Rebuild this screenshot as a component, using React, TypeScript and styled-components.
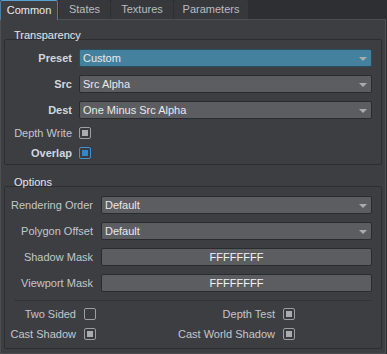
import React from 'react';
import styled, { createGlobalStyle, css } from 'styled-components';

type Option = { label: string; value: string; bold?: boolean; accent?: boolean };

const tabs = [
  { name: 'Common', width: 58 },
  { name: 'States', width: 51 },
  { name: 'Textures', width: 62 },
  { name: 'Parameters', width: 74 },
];

const blendRows: Option[] = [
  { label: 'Preset', value: 'Custom', bold: true, accent: true },
  { label: 'Src', value: 'Src Alpha', bold: true },
  { label: 'Dest', value: 'One Minus Src Alpha', bold: true },
];

const App: React.FC = () => {
  return (
    <Root>
      <GlobalStyle />
      <TabBar>
        {tabs.map((t, i) => (
          <Tab key={t.name} $width={t.width} $active={i === 0}>
            {t.name}
          </Tab>
        ))}
      </TabBar>
      <Panel>
        <GroupTitle>Transparency</GroupTitle>
        <GroupBox>
          {blendRows.map((row) => (
            <Row key={row.label} $labelWidth={67}>
              <Label $bold={row.bold}>{row.label}</Label>
              <Select $accent={row.accent}>
                <span>{row.value}</span>
                <Arrow />
              </Select>
            </Row>
          ))}
          <Row $labelWidth={67}>
            <Label>Depth Write</Label>
            <Check $state="on" />
          </Row>
          <Row $labelWidth={67}>
            <Label $bold>Overlap</Label>
            <Check $state="active" />
          </Row>
        </GroupBox>

        <GroupTitle $top={11}>Options</GroupTitle>
        <GroupBox $bottom={8}>
          <Row $labelWidth={88} $gap={8}>
            <Label>Rendering Order</Label>
            <Select>
              <span>Default</span>
              <Arrow />
            </Select>
          </Row>
          <Row $labelWidth={88} $gap={8}>
            <Label>Polygon Offset</Label>
            <Select>
              <span>Default</span>
              <Arrow />
            </Select>
          </Row>
          <Row $labelWidth={88} $gap={8}>
            <Label>Shadow Mask</Label>
            <MaskField>FFFFFFFF</MaskField>
          </Row>
          <Row $labelWidth={88} $gap={8}>
            <Label>Viewport Mask</Label>
            <MaskField>FFFFFFFF</MaskField>
          </Row>
          <Separator />
          <CheckGrid>
            <Label>Two Sided</Label>
            <Check $state="off" />
            <Label>Depth Test</Label>
            <Check $state="on" />
            <Label>Cast Shadow</Label>
            <Check $state="on" />
            <Label>Cast World Shadow</Label>
            <Check $state="on" />
          </CheckGrid>
        </GroupBox>
      </Panel>
    </Root>
  );
};

const GlobalStyle = createGlobalStyle`
  html, body {
    margin: 0;
    padding: 0;
    background: #2e2f33;
  }
  body {
    font-family: "Liberation Sans", Arial, sans-serif;
    font-size: 11px;
  }
`;

const Root = styled.div`
  width: 387px;
  height: 354px;
  background: #2e2f33;
  overflow: hidden;
`;

const TabBar = styled.div`
  display: flex;
  gap: 1px;
  height: 19px;
`;

const Tab = styled.div<{ $active?: boolean; $width: number }>`
  width: ${(p) => p.$width}px;
  height: 19px;
  box-sizing: border-box;
  text-align: center;
  line-height: 19px;
  color: #b9bcc2;
  background: #37383c;
  border-radius: 2px 2px 0 0;

  ${(p) =>
    p.$active &&
    css`
      position: relative;
      z-index: 1;
      height: 20px;
      line-height: 18px;
      color: #e8eaee;
      background: #3d3e42;
      border: 1px solid #4a7fa6;
      border-bottom: none;
      border-top-color: #5aa0d0;
    `}
`;

const Panel = styled.div`
  width: 386px;
  height: 335px;
  box-sizing: border-box;
  background: #3d3e42;
  border: 1px solid #4d4e52;
  padding: 9px 3px 0;
`;

const GroupTitle = styled.div<{ $top?: number }>`
  height: 10px;
  line-height: 12px;
  margin-top: ${(p) => p.$top ?? 0}px;
  padding-left: 10px;
  color: #e4e6ea;
  white-space: nowrap;
`;

const GroupBox = styled.div<{ $bottom?: number }>`
  display: flex;
  flex-direction: column;
  gap: 8px;
  border: 1px solid #2d2e31;
  border-radius: 2px;
  padding: 9px 9px ${(p) => p.$bottom ?? 5}px 0;
`;

const Row = styled.div<{ $labelWidth: number; $gap?: number }>`
  display: grid;
  grid-template-columns: ${(p) => p.$labelWidth}px 1fr;
  column-gap: ${(p) => p.$gap ?? 7}px;
  align-items: center;
  justify-items: start;
`;

const Label = styled.div<{ $bold?: boolean }>`
  justify-self: end;
  line-height: 12px;
  white-space: nowrap;
  color: ${(p) => (p.$bold ? '#d2d7df' : '#c4c6ca')};
  font-weight: ${(p) => (p.$bold ? 700 : 400)};
`;

const fieldCSS = css`
  justify-self: stretch;
  height: 18px;
  box-sizing: border-box;
  border: 1px solid #2a2b2e;
  border-radius: 2px;
  background: #5c5d61;
  color: #e8e9eb;
  line-height: 16px;
  white-space: nowrap;
`;

const Select = styled.div<{ $accent?: boolean }>`
  ${fieldCSS}
  display: flex;
  align-items: center;
  justify-content: space-between;
  padding: 0 4px 0 3px;

  ${(p) =>
    p.$accent &&
    css`
      background: #44819f;
      border-color: #2b4d60;
    `}
`;

const Arrow = styled.i`
  width: 0;
  height: 0;
  margin-top: 1px;
  border-left: 4px solid transparent;
  border-right: 4px solid transparent;
  border-top: 4px solid #a9abb0;
`;

const MaskField = styled.div`
  ${fieldCSS}
  text-align: center;
  color: #f4f4f4;
`;

const Separator = styled.div`
  height: 1px;
  margin: 0 0 0 9px;
  background: #333438;
`;

const CheckGrid = styled.div`
  display: grid;
  grid-template-columns: 71px 12px 171px 12px;
  column-gap: 8px;
  row-gap: 8px;
  align-items: center;
  margin-top: -1px;
`;

const Check = styled.span<{ $state: 'on' | 'off' | 'active' }>`
  width: 12px;
  height: 12px;
  box-sizing: border-box;
  border: 1px solid ${(p) => (p.$state === 'active' ? '#3d93d6' : '#9c9ea2')};
  border-radius: 2px;
  background: #3a3b3f;
  display: flex;
  align-items: center;
  justify-content: center;

  &::after {
    content: '';
    width: 6px;
    height: 6px;
    display: ${(p) => (p.$state === 'off' ? 'none' : 'block')};
    background: ${(p) => (p.$state === 'active' ? '#2b88d3' : '#a9abaf')};
  }
`;

export default App;
